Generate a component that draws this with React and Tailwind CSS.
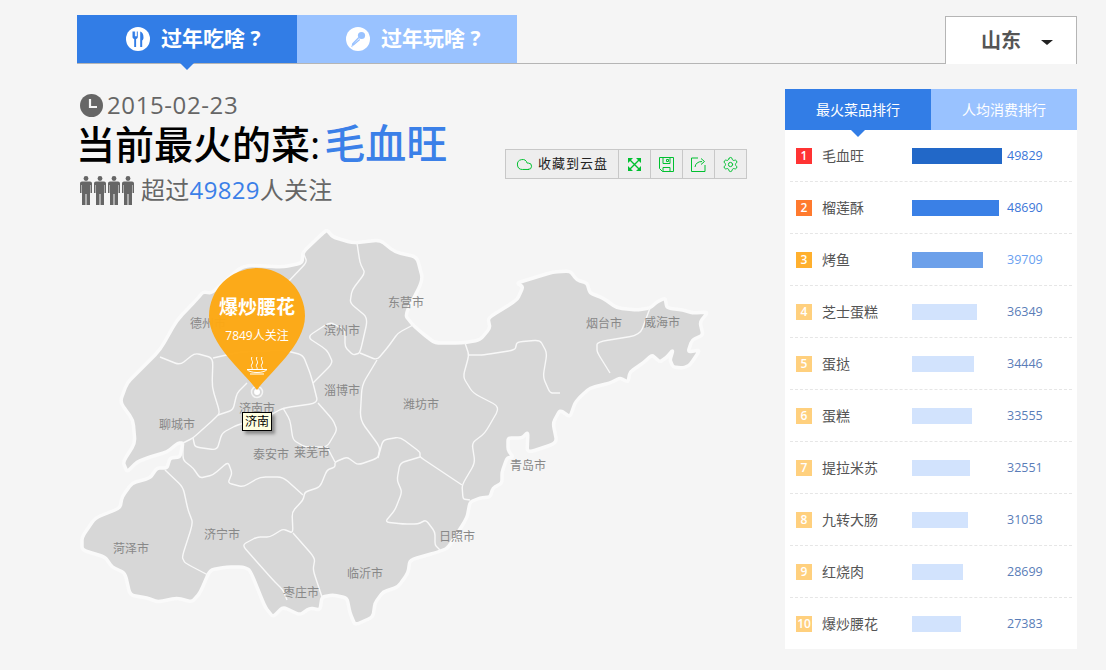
import { Cloud, Settings } from 'lucide-react';

const FONT = 'font-["Open_Sans","Noto_Sans_CJK_SC",sans-serif]';

const dishes = [
  { name: '毛血旺', count: 49829, bar: 'w-[90px] bg-[#2268c8]', badge: 'bg-[#ff3333]', num: 'text-[#3b76d8]' },
  { name: '榴莲酥', count: 48690, bar: 'w-[87px] bg-[#3a80e6]', badge: 'bg-[#ff7a2e]', num: 'text-[#3b76d8]' },
  { name: '烤鱼', count: 39709, bar: 'w-[71px] bg-[#6ca0ea]', badge: 'bg-[#ffb02e]', num: 'text-[#6a9ff0]' },
  { name: '芝士蛋糕', count: 36349, bar: 'w-[65px] bg-[#d2e3fd]', badge: 'bg-[#ffd07e]', num: 'text-[#5a7db8]' },
  { name: '蛋挞', count: 34446, bar: 'w-[62px] bg-[#d2e3fd]', badge: 'bg-[#ffd07e]', num: 'text-[#5a7db8]' },
  { name: '蛋糕', count: 33555, bar: 'w-[60px] bg-[#d2e3fd]', badge: 'bg-[#ffd07e]', num: 'text-[#5a7db8]' },
  { name: '提拉米苏', count: 32551, bar: 'w-[58px] bg-[#d2e3fd]', badge: 'bg-[#ffd07e]', num: 'text-[#5a7db8]' },
  { name: '九转大肠', count: 31058, bar: 'w-[56px] bg-[#d2e3fd]', badge: 'bg-[#ffd07e]', num: 'text-[#5a7db8]' },
  { name: '红烧肉', count: 28699, bar: 'w-[51px] bg-[#d2e3fd]', badge: 'bg-[#ffd07e]', num: 'text-[#5a7db8]' },
  { name: '爆炒腰花', count: 27383, bar: 'w-[49px] bg-[#d2e3fd]', badge: 'bg-[#ffd07e]', num: 'text-[#5a7db8]' },
];

const cities = [
  ['德州市', 208, 328], ['滨州市', 342, 335], ['东营市', 406, 307], ['烟台市', 604, 328],
  ['威海市', 662, 327], ['淄博市', 342, 395], ['潍坊市', 421, 409], ['济南市', 257, 413],
  ['聊城市', 177, 429], ['泰安市', 271, 459], ['莱芜市', 312, 457], ['青岛市', 528, 470],
  ['济宁市', 222, 539], ['菏泽市', 131, 553], ['日照市', 457, 541], ['临沂市', 365, 578],
  ['枣庄市', 301, 597],
];

const outline = [
  [327,230],[333,237],[353,243],[380,240],[395,252],[417,257],[423,280],[405,315],[413,325],[422,333],[435,343],
  [462,343],[480,340],[490,328],[488,318],[517,300],[523,287],[517,283],[533,278],[553,272],[570,271],[577,280],
  [587,283],[590,293],[603,298],[617,308],[637,310],[650,308],[657,302],[665,298],[667,308],[683,310],[693,313],
  [708,312],[700,322],[703,335],[692,340],[688,352],[700,350],[690,365],[683,368],[673,367],[670,360],[673,350],
  [667,357],[660,362],[652,355],[643,363],[630,372],[628,382],[620,378],[610,383],[590,388],[580,397],[575,403],
  [570,417],[560,410],[553,423],[557,443],[527,453],[528,432],[522,438],[508,438],[508,450],[513,457],[507,458],
  [502,472],[502,483],[493,488],[490,497],[480,498],[470,502],[467,518],[448,548],[438,552],[410,560],[408,573],
  [398,587],[383,592],[375,603],[373,617],[355,625],[350,613],[347,598],[333,595],[322,597],[320,610],[310,608],
  [300,615],[283,607],[273,617],[265,607],[250,570],[243,567],[227,567],[210,570],[200,593],[192,602],[177,598],
  [158,602],[147,598],[130,595],[125,573],[112,567],[105,557],[82,550],[82,537],[95,518],[120,508],[122,497],
  [132,483],[150,478],[157,468],[167,468],[170,458],[180,457],[183,443],[178,443],[167,452],[150,457],[137,462],
  [127,472],[123,462],[135,443],[133,420],[120,402],[127,383],[140,370],[160,350],[177,320],[198,298],[203,292],
  [212,293],[243,265],[283,267],[302,263],[303,252],[323,233],
];

const borders = [
  [[160,357],[180,365],[195,353],[213,358],[212,387],[220,413],[213,420],[193,438],[183,443]],
  [[213,358],[240,352],[283,350],[303,355],[310,373],[313,383],[318,403],[283,408],[267,417],[237,425],[222,433],[217,450],[195,447],[193,438]],
  [[303,252],[307,262],[287,283]],
  [[247,383],[237,393],[233,410],[218,415]],
  [[357,243],[360,263],[365,273],[352,290],[350,303],[368,318],[360,353],[353,355],[345,347],[345,330],[330,322],[307,337],[327,350],[333,363],[313,383]],
  [[360,353],[377,360],[388,347],[398,333],[413,325]],
  [[377,360],[362,385],[360,420],[380,447],[378,458],[358,465],[347,457],[335,462],[335,467],[327,470],[320,487],[305,492],[303,500],[292,512],[293,533],[283,529],[270,537],[257,537],[242,545],[257,562],[273,580],[283,590],[287,600]],
  [[318,403],[333,420],[337,430],[327,447],[305,447],[293,440],[290,420],[283,408]],
  [[327,447],[335,462]],
  [[293,533],[315,558],[313,570],[322,597]],
  [[183,443],[183,460],[193,468],[200,478],[213,475],[228,462],[232,473],[228,483],[243,487],[260,477],[283,477],[303,495]],
  [[165,470],[183,487],[188,510],[193,523],[182,557],[185,563],[208,575]],
  [[465,343],[469,355],[463,377],[473,393],[500,407],[485,433],[472,443],[475,463],[462,485],[463,499],[470,500]],
  [[469,355],[483,355],[515,350],[517,342],[540,340],[547,353],[543,377],[550,393],[560,393]],
  [[650,308],[640,335],[597,342],[597,352],[610,373]],
  [[378,458],[383,440],[400,437],[420,452],[420,457],[435,467],[462,485]],
  [[420,457],[400,463],[397,480],[402,492],[395,510],[385,522],[403,524],[418,524],[426,520],[435,532],[435,545],[440,550]],
];

// round the corners of a hand traced polyline, keeping close to its points
function smooth(pts, closed) {
  const at = (a, b, t) => `${a[0] + (b[0] - a[0]) * t} ${a[1] + (b[1] - a[1]) * t}`;
  const n = pts.length;
  let d = closed ? `M${at(pts[n - 1], pts[0], 0.75)}` : `M${pts[0][0]} ${pts[0][1]}`;
  const first = closed ? 0 : 1;
  const end = closed ? n : n - 1;
  for (let i = first; i < end; i++) {
    const prev = pts[(i - 1 + n) % n];
    const next = pts[(i + 1) % n];
    d += `L${at(prev, pts[i], 0.75)}Q${pts[i][0]} ${pts[i][1]} ${at(pts[i], next, 0.25)}`;
  }
  return closed ? d + 'Z' : d + `L${pts[n - 1][0]} ${pts[n - 1][1]}`;
}

function ForkIcon() {
  return (
    <svg width="24" height="24" viewBox="0 0 24 24">
      <circle cx="12" cy="12" r="12" fill="#fff" />
      <path d="M6.500 4.500v5.200c0 1.300.8 2.100 1.700 2.400V20h1.900v-7.900c.9-.3 1.700-1.100 1.700-2.400V4.500h-1v4.700h-.9V4.500H9.800v4.700h-.9V4.500z" fill="#327de6" />
      <path d="M14.200 4.500c2.200.5 3.300 3 3.300 6 0 1.500-.4 2.500-1.300 2.900V20h-2z" fill="#327de6" />
    </svg>
  );
}

function MicIcon() {
  return (
    <svg width="24" height="24" viewBox="0 0 24 24">
      <circle cx="12" cy="12" r="12" fill="#fff" />
      <circle cx="15.500" cy="8.500" r="3.600" fill="#99c2ff" />
      <path d="M12.800 10.500l-6 6.200c-.6.700-.2 1.500.6 1.200l6.300-5.500" fill="none" stroke="#99c2ff" strokeWidth="1.300" />
      <path d="M7 17.500c-1 1.200-1.500 2-.8 2.600" fill="none" stroke="#99c2ff" strokeWidth="1" />
    </svg>
  );
}

function ClockIcon() {
  return (
    <svg width="23" height="23" viewBox="0 0 23 23">
      <circle cx="11.500" cy="11.500" r="11.500" fill="#666" />
      <path d="M10 5v8h7" fill="none" stroke="#f5f5f5" strokeWidth="2.200" />
    </svg>
  );
}

function Person() {
  return (
    <svg width="12" height="29" viewBox="0 0 12 29">
      <circle cx="6" cy="2.500" r="2.400" fill="#666" />
      <path d="M2 5.500h8c1.100 0 2 .9 2 2V17h-1.500V9H10v20H6.500V18h-1v11H2V9h-.5v8H0V7.500c0-1.100.9-2 2-2z" fill="#666" />
    </svg>
  );
}

function ToolButton({ children }) {
  return (
    <div className="flex h-full w-[32px] items-center justify-center border-l border-[#c8c8c8]">{children}</div>
  );
}

function Toolbar() {
  return (
    <div className="flex h-[30px] items-center border border-[#c8c8c8] bg-[#eeeeee] text-[#00c030]">
      <div className="flex h-full w-[112px] items-center pl-[10px]">
        <Cloud size={17} strokeWidth={1.4} />
        <span className="ml-[5px] text-[13px] tracking-[1px] text-[#222]">收藏到云盘</span>
      </div>
      <ToolButton>
        <svg width="13" height="13" viewBox="0 0 13 13" fill="currentColor">
          <path d="M0 0h5L0 5zM13 0v5L8 0zM0 13V8l5 5zM13 13H8l5-5z" />
          <path d="M1.500 1.500l10 10M11.500 1.500l-10 10" stroke="currentColor" strokeWidth="1.400" />
        </svg>
      </ToolButton>
      <ToolButton>
        <svg width="15" height="15" viewBox="0 0 15 15" fill="none" stroke="currentColor">
          <path d="M.5.500h14v14h-11l-3-3zM4 .500v6h7v-6M4 14.500v-4h7v4M7.500 2.500h2v2h-2z" />
        </svg>
      </ToolButton>
      <ToolButton>
        <svg width="15" height="15" viewBox="0 0 15 15" fill="none" stroke="currentColor">
          <path d="M7 1H.5v13.500h13.500V8" />
          <path d="M4 10c.5-3.500 3-5.500 7-5.500M10 1.500l3.500 3-3.500 3" />
        </svg>
      </ToolButton>
      <ToolButton>
        <Settings size={17} strokeWidth={1.4} />
      </ToolButton>
    </div>
  );
}

function ShandongMap() {
  return (
    <div className="relative h-[420px] w-[700px]">
      <svg width="700" height="420" viewBox="77 222 700 420">
        <path d={smooth(outline, true)} fill="#d7d7d7" stroke="#fafafa" strokeWidth="3.500" strokeLinejoin="round" />
        {borders.map((b, i) => (
          <path key={i} d={smooth(b)} fill="none" stroke="#f8f8f8" strokeWidth="1.400" strokeLinejoin="round" />
        ))}
        {cities.map(([name, x, y]) => (
          <text key={name} x={x} y={y} textAnchor="middle" className="fill-[#888888] text-[12px]">{name}</text>
        ))}
        <circle cx="257" cy="392" r="5.500" fill="#d7d7d7" stroke="#f4f4f4" strokeWidth="1.500" />
        <circle cx="257" cy="392" r="3" fill="#fff" />
        <path d="M257 390C244 372 209 345 209 316a48 48 0 0 1 96 0C305 345 270 372 257 390z" fill="#fda813" fillOpacity="0.97" />
        <g fill="none" stroke="#fff" strokeWidth="1">
          <path d="M252 357c-2 3 2 4 0 7s1 3 0 5M257 357c-2 3 2 4 0 7s1 3 0 5M262 357c-2 3 2 4 0 7s1 3 0 5" />
          <path d="M247 369.500c3 4 17 4 20 0zM250 374h14" />
        </g>
      </svg>
      <div className="absolute left-[132px] top-[76px] w-[96px] text-center leading-none text-white">
        <div className="text-[19px] font-bold">爆炒腰花</div>
        <div className="mt-[13px] text-[12px]">7849人关注</div>
      </div>
      <div className="absolute left-[165px] top-[190px] border border-black bg-[#ffffe1] px-[2px] text-[12px] leading-[17px] text-black shadow-[3px_3px_3px_rgba(0,0,0,0.35)]">
        济南
      </div>
    </div>
  );
}

function Ranking() {
  return (
    <div className="w-[292px] bg-white">
      <div className="relative flex h-[41px] text-[14px] text-white">
        <div className="flex w-[146px] items-center justify-center bg-[#327de6]">最火菜品排行</div>
        <div className="flex w-[146px] items-center justify-center bg-[#99c2ff]">人均消费排行</div>
        <div className="absolute left-[66px] top-[41px] h-0 w-0 border-x-[7px] border-t-[7px] border-x-transparent border-t-[#327de6]" />
      </div>
      {dishes.map((d, i) => (
        <div
          key={d.name}
          className={`mx-[5px] flex items-center px-[6px] pt-[1px] ${i < 9 ? 'h-[52px] border-b border-dashed border-[#e6e6e6]' : 'h-[51px]'}`}
        >
          <div className={`flex h-[16px] w-[16px] items-center justify-center text-[12px] font-semibold text-white ${d.badge}`}>
            {i + 1}
          </div>
          <div className="ml-[10px] w-[90px] pb-[2px] text-[14px] text-[#555]">{d.name}</div>
          <div className="w-[95px]">
            <div className={`h-[16px] ${d.bar}`} />
          </div>
          <div className={`text-[12.500px] ${d.num}`}>{d.count}</div>
        </div>
      ))}
    </div>
  );
}

export default function App() {
  return (
    <div className={`h-[670px] w-full overflow-hidden bg-[#f5f5f5] pl-[77px] pt-[15px] ${FONT}`}>
      <div className="relative flex h-[49px] w-[1000px] items-start border-b border-[#b5b5b5]">
        <div className="flex h-[48px] w-[220px] items-center gap-[11px] bg-[#327de6] pl-[49px] text-[21px] font-bold text-white">
          <ForkIcon />
          <span className="whitespace-pre">过年吃啥 ?</span>
        </div>
        <div className="flex h-[48px] w-[220px] items-center gap-[11px] bg-[#99c2ff] pl-[49px] text-[21px] font-bold text-white">
          <MicIcon />
          <span className="whitespace-pre">过年玩啥 ?</span>
        </div>
        <div className="absolute left-[103px] top-[48px] h-0 w-0 border-x-[7px] border-t-[7px] border-x-transparent border-t-[#327de6]" />
        <div className="ml-auto mt-[1px] flex h-[48px] w-[132px] items-center border border-b-0 border-[#b5b5b5] bg-white pl-[35px] text-[20px] font-semibold text-[#555]">
          山东
          <span className="ml-[20px] mt-[3px] h-0 w-0 border-x-[6px] border-t-[5px] border-x-transparent border-t-[#222]" />
        </div>
      </div>

      <div className="mt-[25px] flex w-[1000px] items-start">
        <div className="w-[708px]">
          <div className="flex h-[133px] items-start">
            <div className="w-[428px] pl-[3px]">
              <div className="flex h-[30px] items-center gap-[4px] pt-[2px] text-[24px] leading-none tracking-[0.6px] text-[#666]">
                <ClockIcon />
                <span>2015-02-23</span>
              </div>
              <div className="-ml-[4px] flex h-[48px] items-center font-medium leading-none text-black">
                <span className="text-[39px]">当前最火的菜:</span>
                <span className="ml-[4px] text-[41px] text-[#3b80e8]">毛血旺</span>
              </div>
              <div className="mt-[5px] flex h-[36px] items-center text-[24px] tracking-[0.3px] text-[#666]">
                <span className="flex gap-[2px]">
                  <Person /><Person /><Person /><Person />
                </span>
                <span className="ml-[7px]">超过<span className="text-[#3b80e8]">49829</span>人关注</span>
              </div>
            </div>
            <div className="mt-[60px]">
              <Toolbar />
            </div>
          </div>
          <ShandongMap />
        </div>
        <Ranking />
      </div>
    </div>
  );
}
